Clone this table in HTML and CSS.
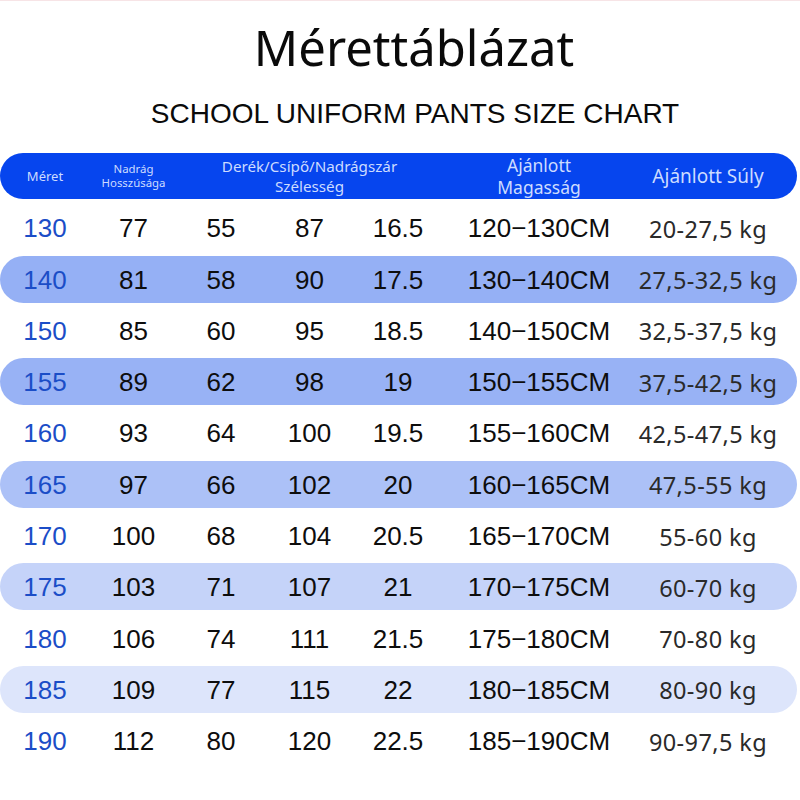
FILE: index.html
```html
<!DOCTYPE html>
<html lang="hu">
<head>
<meta charset="utf-8">
<title>Mérettáblázat</title>
<link rel="stylesheet" href="styles.css">
</head>
<body>
<div class="page">
  <h1 class="title">Mérettáblázat</h1>
  <h2 class="subtitle">SCHOOL UNIFORM PANTS SIZE CHART</h2>
  <div class="table">
    <div class="row head">
      <div class="h h1">Méret</div>
      <div class="h h2">Nadrág<br>Hosszúsága</div>
      <div class="h h3">Derék/Csípő/Nadrágszár<br>Szélesség</div>
      <div class="h h4">Ajánlott<br>Magasság</div>
      <div class="h h5">Ajánlott Súly</div>
    </div>
    <div class="row"><div class="c size">130</div><div class="c">77</div><div class="c">55</div><div class="c">87</div><div class="c">16.5</div><div class="c">120−130CM</div><div class="c kg">20-27,5 kg</div></div>
    <div class="row s1"><div class="c size">140</div><div class="c">81</div><div class="c">58</div><div class="c">90</div><div class="c">17.5</div><div class="c">130−140CM</div><div class="c kg">27,5-32,5 kg</div></div>
    <div class="row"><div class="c size">150</div><div class="c">85</div><div class="c">60</div><div class="c">95</div><div class="c">18.5</div><div class="c">140−150CM</div><div class="c kg">32,5-37,5 kg</div></div>
    <div class="row s2"><div class="c size">155</div><div class="c">89</div><div class="c">62</div><div class="c">98</div><div class="c">19</div><div class="c">150−155CM</div><div class="c kg">37,5-42,5 kg</div></div>
    <div class="row"><div class="c size">160</div><div class="c">93</div><div class="c">64</div><div class="c">100</div><div class="c">19.5</div><div class="c">155−160CM</div><div class="c kg">42,5-47,5 kg</div></div>
    <div class="row s3"><div class="c size">165</div><div class="c">97</div><div class="c">66</div><div class="c">102</div><div class="c">20</div><div class="c">160−165CM</div><div class="c kg">47,5-55 kg</div></div>
    <div class="row"><div class="c size">170</div><div class="c">100</div><div class="c">68</div><div class="c">104</div><div class="c">20.5</div><div class="c">165−170CM</div><div class="c kg">55-60 kg</div></div>
    <div class="row s4"><div class="c size">175</div><div class="c">103</div><div class="c">71</div><div class="c">107</div><div class="c">21</div><div class="c">170−175CM</div><div class="c kg">60-70 kg</div></div>
    <div class="row"><div class="c size">180</div><div class="c">106</div><div class="c">74</div><div class="c">111</div><div class="c">21.5</div><div class="c">175−180CM</div><div class="c kg">70-80 kg</div></div>
    <div class="row s5"><div class="c size">185</div><div class="c">109</div><div class="c">77</div><div class="c">115</div><div class="c">22</div><div class="c">180−185CM</div><div class="c kg">80-90 kg</div></div>
    <div class="row"><div class="c size">190</div><div class="c">112</div><div class="c">80</div><div class="c">120</div><div class="c">22.5</div><div class="c">185−190CM</div><div class="c kg">90-97,5 kg</div></div>
  </div>
</div>
</body>
</html>
```
FILE: styles.css
```css
html, body {
  margin: 0;
  padding: 0;
  background: #ffffff;
}
body {
  border-top: 1px solid #f7e4e6;
}
.page {
  width: 800px;
  height: 799px;
  overflow: hidden;
}
.title {
  margin: 0;
  padding-top: 18px;
  height: 56px;
  text-align: center;
  padding-left: 28px;
  font-family: "Noto Sans", "Open Sans", sans-serif;
  font-weight: 400;
  font-size: 49px;
  line-height: 56px;
  color: #0a0a0a;
}
.subtitle {
  margin: 0;
  padding-top: 24px;
  height: 30px;
  text-align: center;
  padding-left: 30px;
  font-family: "Liberation Sans", Arial, sans-serif;
  font-weight: 400;
  font-size: 28px;
  line-height: 30px;
  color: #0a0a0a;
}
.table {
  margin-top: 24px;
  width: 797px;
  display: flex;
  flex-direction: column;
  gap: 4.3px;
}
.row {
  display: grid;
  grid-template-columns: 90px 87px 88px 89px 88px 194px 144px;
  height: 47px;
  box-sizing: border-box;
  align-items: center;
  border-radius: 24px;
}
.row:not(.head) {
  padding-top: 2px;
}
.head {
  height: 46px;
  background: #0645ee;
  grid-template-columns: 90px 87px 265px 194px 144px;
  margin-bottom: 1px;
}
.h {
  text-align: center;
  font-family: "Noto Sans", "Open Sans", sans-serif;
  color: #cddcff;
}
.h1 { font-size: 13px; }
.h2 { font-size: 11.4px; line-height: 14px; }
.h3 { font-size: 15.2px; line-height: 20px; }
.h4 { font-size: 17.5px; line-height: 22px; }
.h5 { font-size: 19px; }
.c {
  text-align: center;
  font-family: "Liberation Sans", Arial, sans-serif;
  font-size: 26px;
  color: #0d0d0d;
}
.c.size {
  color: #1b4dc7;
}
.c.kg {
  font-family: "Noto Sans", "Open Sans", sans-serif;
  font-size: 23.5px;
  letter-spacing: 0.4px;
  color: #2a2a2a;
}
.s1 { background: #95b0f5; }
.s2 { background: #98b2f5; }
.s3 { background: #acc1f7; }
.s4 { background: #c5d3f9; }
.s5 { background: #dde5fb; }
```
